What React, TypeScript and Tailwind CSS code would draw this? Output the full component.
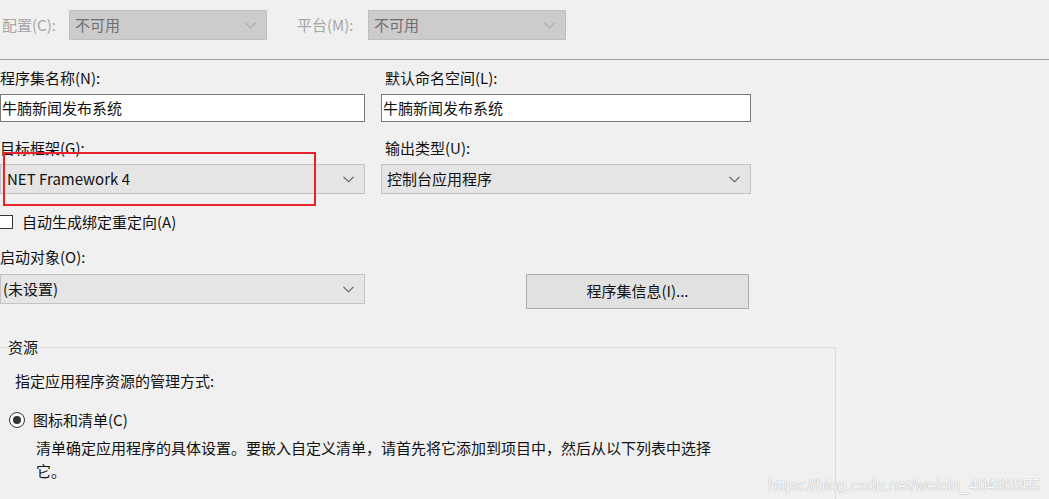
const font = { fontFamily: '"Noto Sans CJK SC", "Microsoft YaHei", sans-serif' };

const Chevron = ({ color = "#606060" }: { color?: string }) => (
  <svg width="11" height="7" viewBox="0 0 11 7" fill="none">
    <path d="M0.5 0.8 L5.5 5.8 L10.5 0.8" stroke={color} strokeWidth="1.1" />
  </svg>
);

type SelectProps = {
  value: string;
  className?: string;
  disabled?: boolean;
};

const Select = ({ value, className = "", disabled }: SelectProps) => (
  <div
    className={`flex h-[30px] items-center justify-between border pl-[5px] pr-[10px] ${
      disabled
        ? "border-[#bfbfbf] bg-[#cccccc] text-[#6f6f6f]"
        : "border-[#c4c4c4] bg-[#e5e5e5] text-[#111111]"
    } ${className}`}
  >
    <span className="leading-[20px]">{value}</span>
    <Chevron color={disabled ? "#a8a8a8" : "#5a5a5a"} />
  </div>
);

const Input = ({ value, className = "" }: { value: string; className?: string }) => (
  <div
    className={`flex h-[28px] items-center border border-[#7a7a7a] bg-white pl-[1px] text-[#111111] ${className}`}
  >
    <span className="leading-[20px]">{value}</span>
  </div>
);

const Label = ({ children }: { children: React.ReactNode }) => (
  <div className="h-[20px] leading-[20px] text-[#111111]">{children}</div>
);

export default function App() {
  return (
    <div
      className="relative h-[499px] w-[1049px] overflow-hidden bg-[#f0f0f0] text-[15px]"
      style={font}
    >
      {/* CONFIG BAR */}
      <div className="flex h-[60px] items-start border-b border-[#a3a3a3] pt-[10px]">
        <span className="ml-[2px] w-[67px] leading-[30px] text-[#a6a6a6]">配置(C):</span>
        <Select value="不可用" disabled className="w-[198px]" />
        <span className="ml-[30px] w-[71px] leading-[30px] text-[#a6a6a6]">平台(M):</span>
        <Select value="不可用" disabled className="w-[198px]" />
      </div>

      {/* ASSEMBLY FIELDS */}
      <div className="mt-[8px] grid grid-cols-[365px_370px] gap-x-[16px]">
        <div>
          <Label>程序集名称(N):</Label>
          <Input value="牛腩新闻发布系统" className="mt-[6px]" />
        </div>
        <div>
          <div className="pl-[4px]">
            <Label>默认命名空间(L):</Label>
          </div>
          <Input value="牛腩新闻发布系统" className="mt-[6px]" />
        </div>
        <div className="mt-[16px]">
          <Label>目标框架(G):</Label>
          <Select value="NET Framework 4" className="mt-[6px] !pl-[6px]" />
        </div>
        <div className="mt-[16px]">
          <div className="pl-[4px]">
            <Label>输出类型(U):</Label>
          </div>
          <Select value="控制台应用程序" className="mt-[6px]" />
        </div>
      </div>

      {/* BINDING REDIRECT */}
      <div className="mt-[18px] flex h-[20px] items-center">
        <div className="-ml-[1px] h-[14px] w-[14px] border border-[#333333] bg-white" />
        <span className="ml-[9px] leading-[20px] text-[#111111]">自动生成绑定重定向(A)</span>
      </div>

      {/* STARTUP OBJECT */}
      <div className="mt-[15px]">
        <Label>启动对象(O):</Label>
      </div>
      <div className="mt-[7px] flex items-start">
        <Select value="(未设置)" className="w-[365px] !pl-[2px]" />
        <button className="ml-[161px] h-[35px] w-[223px] border border-[#adadad] bg-[#e1e1e1] text-[15px] text-[#111111]">
          程序集信息(I)...
        </button>
      </div>

      {/* RESOURCES GROUP */}
      <fieldset className="mt-[28px] h-[200px] w-[836px] border-r border-t border-[#dcdcdc]">
        <legend className="ml-[8px] px-0 leading-[20px] text-[#111111]">资源</legend>
        <div className="pl-[15px] pt-[14px] leading-[20px] text-[#111111]">
          指定应用程序资源的管理方式:
        </div>
        <div className="mt-[19px] flex h-[20px] items-center pl-[9px]">
          <div className="flex h-[16px] w-[16px] items-center justify-center rounded-full border border-[#333333] bg-white">
            <div className="h-[8px] w-[8px] rounded-full bg-[#333333]" />
          </div>
          <span className="ml-[8px] leading-[20px] text-[#111111]">图标和清单(C)</span>
        </div>
        <div className="mt-[6px] pl-[36px] leading-[23px] text-[#111111]">
          清单确定应用程序的具体设置。要嵌入自定义清单，请首先将它添加到项目中，然后从以下列表中选择
          <br />
          它。
        </div>
      </fieldset>

      {/* ANNOTATION */}
      <div className="absolute left-[3px] top-[152px] h-[54px] w-[313px] border-2 border-[#e8212a]" />

      {/* WATERMARK */}
      <div
        className="absolute left-[768px] top-[476px] text-[16px] leading-[20px] text-[#fafafa] [text-shadow:0_0_1px_#8a8a8a]"
        style={{ fontFamily: '"Liberation Sans", Arial, sans-serif' }}
      >
        https://blog.csdn.net/weixin_40486955
      </div>
    </div>
  );
}
